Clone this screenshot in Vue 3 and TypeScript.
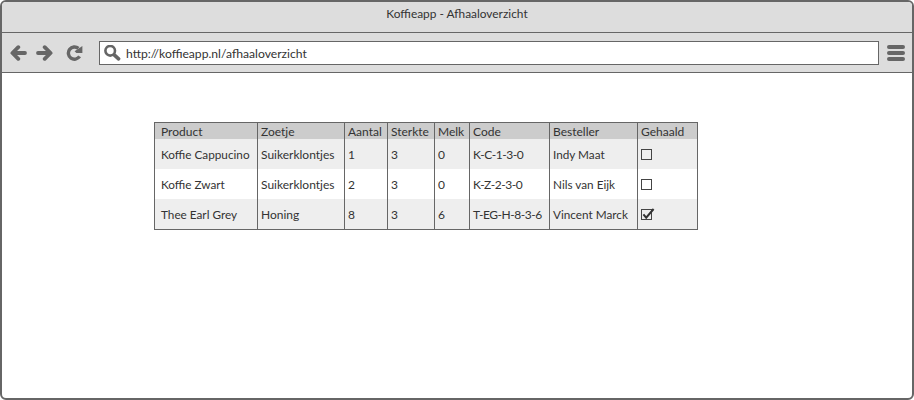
<script setup lang="ts">
interface Order {
  cells: string[]
  pickedUp: boolean
}

const columns: string[] = ['Product', 'Zoetje', 'Aantal', 'Sterkte', 'Melk', 'Code', 'Besteller', 'Gehaald']

const orders: Order[] = [
  { cells: ['Koffie Cappucino', 'Suikerklontjes', '1', '3', '0', 'K-C-1-3-0', 'Indy Maat'], pickedUp: false },
  { cells: ['Koffie Zwart', 'Suikerklontjes', '2', '3', '0', 'K-Z-2-3-0', 'Nils van Eijk'], pickedUp: false },
  { cells: ['Thee Earl Grey', 'Honing', '8', '3', '6', 'T-EG-H-8-3-6', 'Vincent Marck'], pickedUp: true },
]
</script>

<template>
  <div class="window">
    <header class="titlebar"><span class="title">Koffieapp - Afhaaloverzicht</span></header>
    <nav class="toolbar">
      <svg class="arrow" width="17" height="16" viewBox="0 0 17 16">
        <path d="M8.3 2.2 2.4 8 8.3 13.8M3 8H15" />
      </svg>
      <svg class="arrow forward" width="17" height="16" viewBox="0 0 17 16">
        <path d="M8.7 2.2 14.6 8 8.7 13.8M14 8H2" />
      </svg>
      <svg class="reload" width="17" height="16" viewBox="0 0 17 16">
        <path class="ring" d="M13.6 11.4A6.1 6.1 0 1 1 12.4 3.4" />
        <path class="head" d="M16.4 1V8H10.4L8.6 6.2Z" />
      </svg>
      <div class="address">
        <svg class="search" width="17" height="16" viewBox="0 0 17 16">
          <circle cx="6.2" cy="5.8" r="4.8" />
          <path d="M10.2 9.8 14.6 13.8" />
        </svg>
        <span class="url">http://koffieapp.nl/afhaaloverzicht</span>
      </div>
      <svg class="menu" width="18" height="16" viewBox="0 0 18 16">
        <path d="M2 2H16M2 8H16M2 14H16" />
      </svg>
    </nav>
    <main class="page">
      <table class="orders">
        <colgroup>
          <col v-for="(c, i) in columns" :key="c" :class="'col' + i" />
        </colgroup>
        <thead>
          <tr>
            <th v-for="c in columns" :key="c"><div class="label">{{ c }}</div></th>
          </tr>
        </thead>
        <tbody>
          <tr v-for="(order, r) in orders" :key="r">
            <td v-for="(cell, i) in order.cells" :key="i" :class="'cell' + i">{{ cell }}</td>
            <td class="status">
              <svg class="check" width="15" height="14" viewBox="0 0 15 14">
                <rect x=".5" y="2.5" width="10" height="10" />
                <path v-if="order.pickedUp" d="M2.4 7.4 5.2 10.6 12.6 2" />
              </svg>
            </td>
          </tr>
        </tbody>
      </table>
    </main>
  </div>
</template>

<style>
body {
  background: #fff;
}
</style>

<style scoped>
.window {
  box-sizing: border-box;
  width: 914px;
  height: 400px;
  border: 2px solid #666;
  border-radius: 6px;
  overflow: hidden;
  background: #fff;
  color: #333;
  font: 12px/16px Lato, "Open Sans", sans-serif;
}
.titlebar {
  box-sizing: border-box;
  height: 31px;
  padding-top: 4px;
  border-bottom: 1px solid #666;
  background: #ddd;
  font-size: 11.9px;
  text-align: center;
}
.toolbar {
  box-sizing: border-box;
  display: flex;
  align-items: center;
  height: 40px;
  padding-left: 8px;
  border-bottom: 1px solid #666;
  background: #ddd;
}
svg {
  display: block;
  flex: none;
  fill: none;
  stroke: #666;
}
.arrow {
  stroke-width: 3.8;
  stroke-linecap: round;
  stroke-linejoin: round;
}
.forward {
  margin-left: 9px;
}
.reload {
  margin-left: 13px;
}
.ring {
  stroke-width: 3.4;
}
.head {
  fill: #666;
  stroke: none;
}
.address {
  box-sizing: border-box;
  display: flex;
  align-items: center;
  width: 780px;
  height: 24px;
  margin-left: 16px;
  padding-left: 4px;
  border: 1px solid #666;
  background: #fff;
}
.search {
  stroke-width: 2.6;
}
.search path {
  stroke-width: 3.6;
  stroke-linecap: round;
}
.url {
  margin-left: 5px;
  padding-top: 3px;
  font-size: 12.15px;
}
.menu {
  margin-left: 8px;
  stroke-width: 4;
  stroke-linecap: round;
}
.page {
  padding: 49px 0 0 152px;
}
.orders {
  width: 544px;
  height: 108px;
  border-collapse: separate;
  border-spacing: 0;
  border: solid #666;
  border-width: 1px 0 1px 1px;
  table-layout: fixed;
  box-sizing: border-box;
}
.col0 { width: 103px; }
.col1 { width: 87px; }
.col2 { width: 43px; }
.col3 { width: 47px; }
.col4 { width: 35px; }
.col5 { width: 80px; }
.col6 { width: 88px; }
.col7 { width: 60px; }
th,
td {
  box-sizing: border-box;
  padding: 0 0 0 3px;
  border-right: 1px solid #666;
  text-align: left;
  font-weight: normal;
  white-space: nowrap;
}
th:first-child,
td:first-child {
  padding-left: 6px;
}
th {
  height: 16px;
  background: #ccc;
}
.label {
  height: 14px;
  padding-top: 2px;
  line-height: 14px;
}
td {
  height: 30px;
  padding-top: 1px;
}
.cell0,
.cell6 {
  font-size: 11.75px;
}
.cell5 {
  letter-spacing: -0.45px;
}
tbody tr:nth-child(odd) {
  background: #eee;
}
td.status {
  padding: 0 0 1px 3px;
}
.check {
  stroke: #444;
  stroke-width: 1;
}
.check path {
  stroke: #333;
  stroke-width: 2;
}
</style>
